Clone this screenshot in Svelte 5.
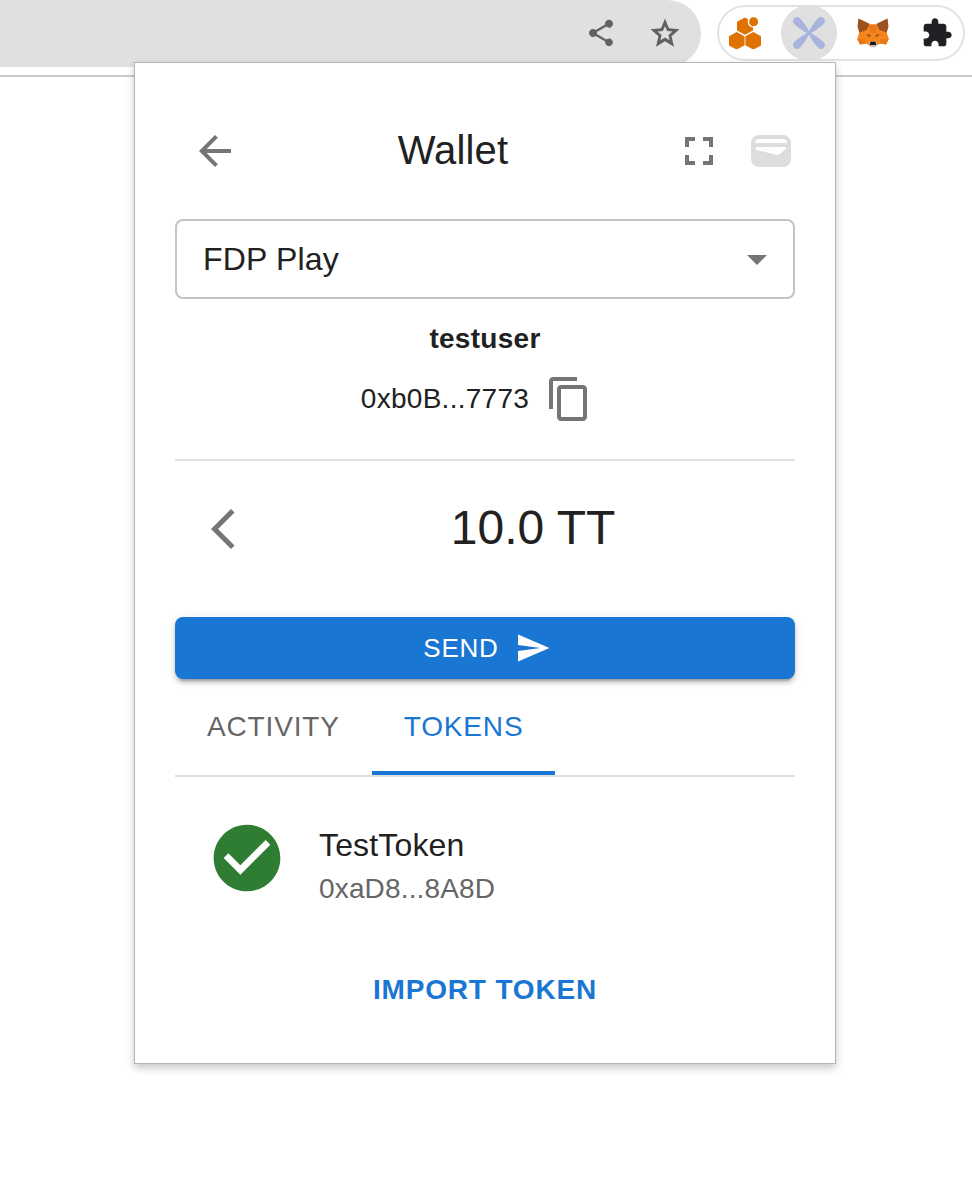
<script lang="ts">
  const networks = ['FDP Play', 'Gnosis Chain', 'Goerli'];
  let network = $state('FDP Play');
  let tab = $state('tokens');
  const tabs = [
    { id: 'activity', label: 'Activity' },
    { id: 'tokens', label: 'Tokens' },
  ];
</script>

<div class="page">
  <header class="toolbar">
    <div class="omnibox">
      <button class="tool" aria-label="Share">
        <svg width="32" height="32" viewBox="0 0 24 24"><path d="M18 16.08c-.76 0-1.44.3-1.96.77L8.91 12.7c.05-.23.09-.46.09-.7s-.04-.47-.09-.7l7.05-4.11c.54.5 1.25.81 2.04.81 1.66 0 3-1.34 3-3s-1.34-3-3-3-3 1.34-3 3c0 .24.04.47.09.7L8.04 9.81C7.5 9.31 6.79 9 6 9c-1.66 0-3 1.34-3 3s1.34 3 3 3c.79 0 1.5-.31 2.04-.81l7.12 4.16c-.05.21-.08.43-.08.65 0 1.61 1.31 2.92 2.92 2.92s2.92-1.31 2.92-2.92-1.31-2.92-2.92-2.92z" /></svg>
      </button>
      <button class="tool" aria-label="Bookmark this tab">
        <svg width="32" height="32" viewBox="0 0 32 32"><path fill-rule="evenodd" d="M16 1.5 19.9 11.2 30.5 12.2 22.5 19.3 25 29.8 16 24.3 7 29.8 9.5 19.3 1.5 12.2 12.1 11.2ZM16 9 18.1 13.9 23.4 14.4 19.4 17.9 20.6 23.2 16 20.4 11.4 23.2 12.6 17.9 8.6 14.4 13.9 13.9Z" /></svg>
      </button>
    </div>
    <div class="extensions">
      <button class="ext" aria-label="Swarm">
        <svg width="32" height="32" viewBox="0 0 32 32" fill="#de7100">
          <path d="M16 .5 19 2.2Q18 6.500 20.600 9.200 22 10.400 24 10.300V13.400L16 17.700 8 13.400V4.800Z" />
          <circle cx="24.600" cy="4.700" r="4.500" />
          <path d="M7.700 15 15.600 19.300V28.300L7.700 32.600-.2 28.300V19.300Z" />
          <path d="M24.300 15 32.200 19.300V28.300L24.300 32.600 16.400 28.300V19.300Z" />
        </svg>
      </button>
      <button class="ext active" aria-label="Wallet extension">
        <svg width="32" height="32" viewBox="-16 -16 32 32" fill="#a9b4de">
          {#each [45, 135, 225, 315] as angle}
            <path transform="rotate({angle})" d="M0-1.200C5-2 9-3.900 16.800-3.900A3.900 3.900 0 0 1 16.800 3.900C9 3.900 5 2 0 1.200Z" />
          {/each}
        </svg>
      </button>
      <button class="ext" aria-label="MetaMask">
        <svg width="32" height="32" viewBox="0 0 32 32">
          <path fill="#f6851b" d="M1.500 2 12 7.500H20L30.500 2 31 10 29.800 16 31.800 22 29 27.500 23 26.500 19 29H13L9 26.500 3 27.500.2 22 2.200 16 1 10Z" />
          <path fill="#e9781a" d="M.2 22H8.500L9 26.500 3 27.500ZM31.800 22H23.500L23 26.500 29 27.500ZM12 7.500H20L18.500 16H13.500Z" />
          <path fill="#9c5220" d="M1.500 1.500 12.500 6.800 9.500 13 2.500 15.500.5 9.500ZM30.500 1.500 19.500 6.800 22.500 13 29.500 15.500 31.500 9.500Z" />
          <path fill="#d66a18" d="M8.500 17.500 13 16.500 13.800 20.500 10.500 19.500ZM23.500 17.500 19 16.500 18.200 20.500 21.500 19.500Z" />
          <path fill="#4a4148" d="M10.500 17.600 13 18.200 13.200 20ZM21.500 17.600 19 18.200 18.800 20Z" />
          <path fill="#c9b7ab" d="M11.500 27 13 24.500H19L20.500 27 18.500 30.200H13.500Z" />
          <path fill="#161616" d="M13.500 24.800H18.500L19.200 28H12.800Z" />
        </svg>
      </button>
      <button class="ext" aria-label="Extensions">
        <svg width="32" height="32" viewBox="0 0 24 24" fill="#202124"><path d="M20.500 11H19V7c0-1.100-.9-2-2-2h-4V3.500C13 2.120 11.880 1 10.500 1S8 2.120 8 3.500V5H4c-1.100 0-1.990.9-1.990 2v3.800H3.500c1.490 0 2.700 1.210 2.700 2.700s-1.210 2.700-2.700 2.700H2V20c0 1.100.9 2 2 2h3.800v-1.500c0-1.490 1.210-2.700 2.700-2.700 1.490 0 2.700 1.210 2.700 2.700V22H17c1.100 0 2-.9 2-2v-4h1.500c1.380 0 2.500-1.120 2.500-2.500S21.880 11 20.500 11z" /></svg>
      </button>
    </div>
  </header>

  <div class="stage">
    <main class="popup">
      <div class="head">
        <button class="icon-button" aria-label="Back">
          <svg width="48" height="48" viewBox="0 0 24 24"><path d="M20 11H7.830l5.590-5.590L12 4l-8 8 8 8 1.410-1.410L7.830 13H20v-2z" /></svg>
        </button>
        <h1>Wallet</h1>
        <div class="head-actions">
          <button aria-label="Full screen">
            <svg width="48" height="48" viewBox="0 0 24 24"><path d="M7 14H5v5h5v-2H7v-3zm-2-4h2V7h3V5H5v5zm12 7h-3v2h5v-5h-2v3zM14 5v2h3v3h2V5h-5z" /></svg>
          </button>
          <button aria-label="Wallet">
            <svg width="40" height="32" viewBox="0 0 40 32">
              <rect width="40" height="32" rx="8" fill="#ddd" />
              <path fill="#fff" d="M4 8.500V8Q4 4 8 4H32Q36 4 36 8V8.500Q35.500 8 34 8H6Q4.500 8 4 8.500ZM4.500 13Q4.500 12 6 12H34Q35.500 12 34.800 14L28.500 19.300Q27.300 20.200 25.500 19.800L5.500 15Q4.500 14.600 4.500 13Z" />
            </svg>
          </button>
        </div>
      </div>

      <div class="select-wrap">
        <select bind:value={network} aria-label="Network">
          {#each networks as name}
            <option>{name}</option>
          {/each}
        </select>
        <svg class="caret" width="48" height="48" viewBox="0 0 24 24"><path d="m7 10 5 5 5-5z" /></svg>
      </div>

      <section class="account">
        <strong>testuser</strong>
        <div class="address">
          <span>0xb0B...7773</span>
          <button class="icon-button" aria-label="Copy address">
            <svg width="48" height="48" viewBox="0 0 24 24"><path d="M16 1H4c-1.100 0-2 .9-2 2v14h2V3h12V1zm3 4H8c-1.100 0-2 .9-2 2v14c0 1.100.9 2 2 2h11c1.100 0 2-.9 2-2V7c0-1.100-.9-2-2-2zm0 16H8V7h11v14z" /></svg>
          </button>
        </div>
      </section>

      <section class="balance">
        <button class="icon-button" aria-label="Back to assets">
          <svg width="48" height="48" viewBox="0 0 24 24"><path d="M17.770 3.770 16 2 6 12l10 10 1.770-1.770L9.540 12z" /></svg>
        </button>
        <span class="amount">10.0 TT</span>
      </section>

      <button class="send">
        Send
        <svg width="36" height="36" viewBox="0 0 24 24"><path d="M2.010 21 23 12 2.010 3 2 10l15 2-15 2z" /></svg>
      </button>

      <div class="tabs" role="tablist">
        {#each tabs as item}
          <button
            role="tab"
            class:selected={tab === item.id}
            aria-selected={tab === item.id}
            onclick={() => (tab = item.id)}>{item.label}</button>
        {/each}
      </div>

      <ul class="tokens">
        <li>
          <svg width="80" height="80" viewBox="0 0 24 24" fill="#2e7d32"><path d="M12 2C6.480 2 2 6.480 2 12s4.480 10 10 10 10-4.480 10-10S17.520 2 12 2zm-2 15-5-5 1.410-1.410L10 14.170l7.590-7.590L19 8l-9 9z" /></svg>
          <div class="token-text">
            <span class="token-name">TestToken</span>
            <span class="token-address">0xaD8...8A8D</span>
          </div>
        </li>
      </ul>

      <button class="import">Import token</button>
    </main>
  </div>
</div>

<style>
  :global(body) {
    margin: 0;
    background: #fff;
  }
  .page {
    font-family: 'Liberation Sans', Arial, sans-serif;
    color: #212121;
    letter-spacing: 0.01em;
  }
  button {
    display: flex;
    align-items: center;
    justify-content: center;
    margin: 0;
    padding: 0;
    border: 0;
    background: none;
    color: inherit;
    font: inherit;
    letter-spacing: inherit;
    cursor: pointer;
  }
  svg {
    display: block;
    flex: none;
    fill: #757575;
  }
  svg[fill] {
    fill: revert-layer;
  }

  .toolbar {
    display: flex;
    align-items: flex-start;
    gap: 16px;
    height: 75px;
    padding-right: 7px;
    border-bottom: 2px solid #ccc;
  }
  .omnibox {
    flex: 1;
    display: flex;
    justify-content: flex-end;
    gap: 8px;
    padding: 5px 8px 6px 0;
    border-radius: 0 34px 34px 0;
    background: #e0e0e0;
  }
  .tool {
    width: 56px;
    height: 56px;
  }
  .tool svg {
    fill: #5f6163;
  }
  .extensions {
    display: flex;
    gap: 8px;
    margin-top: 5px;
    border-radius: 28px;
    box-shadow: inset 0 0 0 2px #e2e2e2;
  }
  .ext {
    width: 56px;
    height: 56px;
    border-radius: 50%;
  }
  .ext.active {
    background: #e0e0e0;
  }

  .stage {
    padding: 0 136px 80px 134px;
  }
  .popup {
    position: relative;
    margin-top: -15px;
    padding: 48px 40px 33px;
    border: 1px solid #b5b5b5;
    background: #fff;
    box-shadow: 0 4px 8px rgba(0, 0, 0, 0.22);
  }

  .icon-button {
    flex: none;
    width: 80px;
    height: 80px;
  }
  .head {
    display: flex;
    align-items: center;
    margin-bottom: 28px;
  }
  h1 {
    flex: 1;
    margin: 0;
    padding-bottom: 2px;
    font-size: 40px;
    font-weight: 400;
    line-height: 48px;
    text-align: center;
  }
  .head-actions {
    display: flex;
    align-items: center;
    gap: 28px;
    padding: 0 4px 0 24px;
  }

  .select-wrap {
    display: grid;
    align-items: center;
  }
  select,
  .caret {
    grid-area: 1 / 1;
  }
  select {
    appearance: none;
    width: 100%;
    height: 80px;
    padding: 0 64px 0 26px;
    border: 2px solid #c4c4c4;
    border-radius: 8px;
    background: #fff;
    color: inherit;
    font: inherit;
    font-size: 32px;
    letter-spacing: inherit;
  }
  .caret {
    justify-self: end;
    margin-right: 14px;
    pointer-events: none;
  }

  .account {
    display: flex;
    flex-direction: column;
    align-items: center;
    padding: 20px 0;
    border-bottom: 2px solid #e0e0e0;
    font-size: 28px;
    line-height: 40px;
    letter-spacing: 0.01em;
  }
  .address {
    display: flex;
    align-items: center;
  }

  .balance {
    display: flex;
    align-items: center;
    gap: 8px;
    padding: 28px 0 48px 8px;
  }
  .amount {
    flex: 1;
    padding-bottom: 2px;
    font-size: 48px;
    line-height: 56px;
    letter-spacing: 0;
    text-align: center;
  }

  .send {
    gap: 16px;
    width: 100%;
    height: 62px;
    padding-left: 4px;
    border-radius: 8px;
    background: #1976d2;
    color: #fff;
    font-size: 26px;
    letter-spacing: 0.03em;
    text-transform: uppercase;
    box-shadow:
      0 6px 2px -4px rgba(0, 0, 0, 0.2),
      0 4px 4px rgba(0, 0, 0, 0.14),
      0 2px 10px rgba(0, 0, 0, 0.12);
  }
  .send svg {
    fill: #fff;
  }

  .tabs {
    display: flex;
    border-bottom: 2px solid #e0e0e0;
  }
  .tabs button {
    height: 96px;
    padding: 0 32px;
    color: #666;
    font-size: 28px;
    letter-spacing: 0.03em;
    text-transform: uppercase;
  }
  .tabs .selected {
    color: #1976d2;
    box-shadow: inset 0 -4px #1976d2;
  }

  .tokens {
    margin: 0;
    padding: 41px 32px 40px;
    list-style: none;
  }
  .tokens li {
    display: flex;
    align-items: flex-start;
    gap: 32px;
  }
  .token-text {
    display: flex;
    flex-direction: column;
    padding: 3px 0 1px;
  }
  .token-name {
    font-size: 32px;
    line-height: 48px;
  }
  .token-address {
    color: #666;
    font-size: 28px;
    line-height: 40px;
  }

  .import {
    margin: 0 auto;
    padding: 16px;
    color: #1976d2;
    font-size: 28px;
    font-weight: 700;
    line-height: 48px;
    letter-spacing: 0.03em;
    text-transform: uppercase;
  }
</style>
